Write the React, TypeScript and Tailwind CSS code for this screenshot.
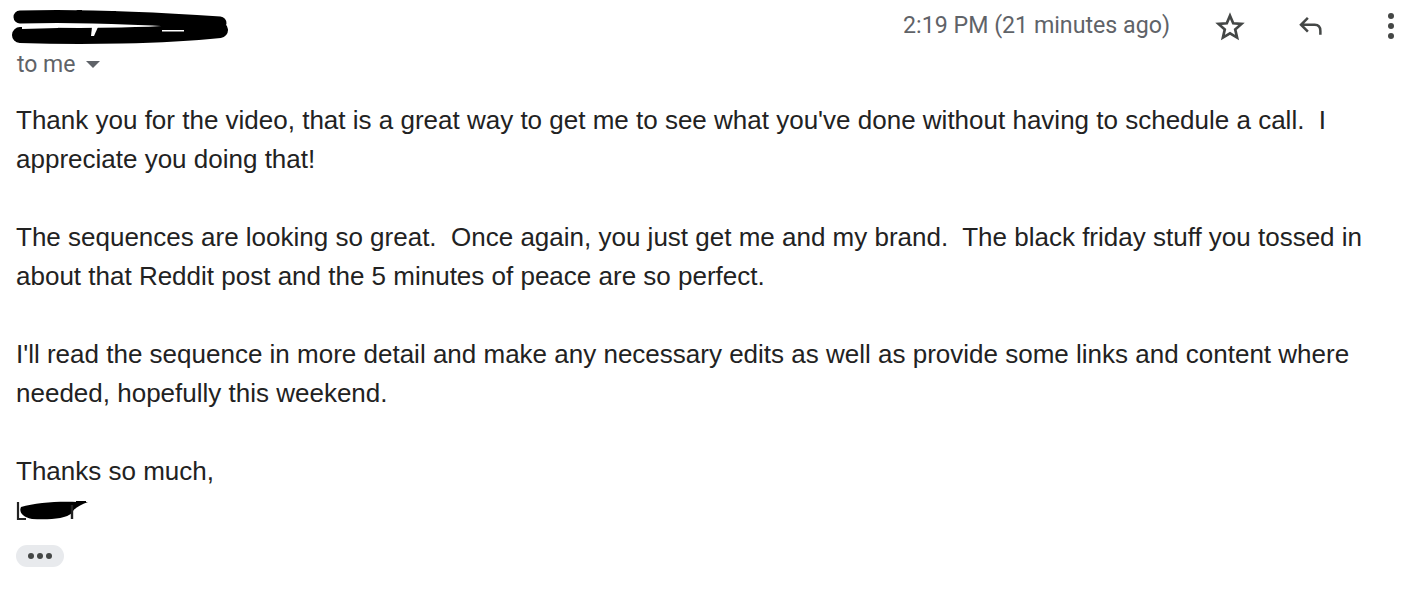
import React from "react";

function Scribble() {
  return (
    <svg width="220" height="38" viewBox="0 0 220 38" className="block">
      <path d="M8 9 C 70 7, 150 11, 208 15" stroke="#000" strokeWidth="13" strokeLinecap="round" fill="none" />
      <path d="M8 27 C 70 29, 150 28, 208 22" stroke="#000" strokeWidth="16" strokeLinecap="round" fill="none" />
      <path d="M10 18 L 46 18 L 46 20 L 10 21 Z" fill="#fff" />
      <path d="M80 19 L 86 19 L 82 28 L 79 28 Z" fill="#fff" />
      <path d="M150 22 L 172 22 L 172 23.5 L 150 23.5 Z" fill="#fff" />
      <path d="M64 2 L 70 2 L 70 6 Z" fill="#000" />
      <path d="M94 3 L 104 3 L 104 6 Z" fill="#000" />
    </svg>
  );
}

function SigScribble() {
  return (
    <svg width="80" height="22" viewBox="0 0 80 22" className="block">
      <path d="M2 3 L2 20 L10 20" stroke="#222" strokeWidth="2.2" fill="none" />
      <path d="M5 8 C 20 3, 46 2, 62 3 L 72 3 C 64 6, 58 9, 56 14 C 50 20, 32 21, 16 20 C 5 18, 3 12, 5 8 Z" fill="#000" />
      <path d="M60 2 L 70 2 L 70 3.6 L 60 3.6 Z" fill="#000" />
      <path d="M56 6 L56 20" stroke="#222" strokeWidth="2.4" />
    </svg>
  );
}

export default function App() {
  const p = "text-[26px] leading-[39px] text-[#222222] whitespace-pre-wrap";
  return (
    <div className="w-[1416px] h-[616px] bg-white relative overflow-hidden" style={{ fontFamily: "'Liberation Sans', Arial, sans-serif" }}>
      {/* header */}
      <div className="flex items-start justify-between pl-[10px] pr-[20px] pt-[8px]">
        <div>
          <div className="pl-[2px]">
            <Scribble />
          </div>
          <div className="flex items-center gap-[10px] pl-[7px] mt-[2px] text-[23px] text-[#5f6368]" style={{ fontFamily: "Roboto, sans-serif" }}>
            <span>to me</span>
            <svg width="14" height="8" viewBox="0 0 14 8"><path d="M0 0 L14 0 L7 7 Z" fill="#5f6368" /></svg>
          </div>
        </div>
        <div className="flex items-center -mt-[1px] text-[23.2px] text-[#5f6368]" style={{ fontFamily: "Roboto, sans-serif" }}>
          <span className="mr-[44px]">2:19 PM (21 minutes ago)</span>
          <svg width="32" height="32" viewBox="0 0 24 24" className="mr-[50px] mt-[4px]">
            <path d="M12 3.5 L14.4 9.2 L20.6 9.7 L15.9 13.8 L17.3 19.9 L12 16.7 L6.7 19.9 L8.1 13.8 L3.4 9.7 L9.6 9.2 Z" fill="none" stroke="#444746" strokeWidth="2" strokeLinejoin="miter" />
          </svg>
          <svg width="30" height="30" viewBox="0 0 24 24" className="mr-[60px] mt-[2px]">
            <path d="M9.5 5.5 L4 11 L9.5 16.5 M4.5 11 H15 C18 11 19.5 13 19.5 16 V19" fill="none" stroke="#444746" strokeWidth="2" />
          </svg>
          <svg width="10" height="30" viewBox="0 0 10 30" className="mt-[2px]">
            <circle cx="5" cy="5" r="3" fill="#444746" />
            <circle cx="5" cy="15" r="3" fill="#444746" />
            <circle cx="5" cy="25" r="3" fill="#444746" />
          </svg>
        </div>
      </div>

      {/* body */}
      <div className="pl-[16px] pt-[18px]">
        <div className={p}>
          Thank you for the video, that is a great way to get me to see what you've done without having to schedule a call.  I
          <br />
          appreciate you doing that!
        </div>
        <div className={p}>{"\u00a0"}</div>
        <div className={p}>
          The sequences are looking so great.  Once again, you just get me and my brand.  The black friday stuff you tossed in
          <br />
          about that Reddit post and the 5 minutes of peace are so perfect.
        </div>
        <div className={p}>{"\u00a0"}</div>
        <div className={p}>
          I'll read the sequence in more detail and make any necessary edits as well as provide some links and content where
          <br />
          needed, hopefully this weekend.
        </div>
        <div className={p}>{"\u00a0"}</div>
        <div className={p}>Thanks so much,</div>
        <div className="h-[39px] flex items-center">
          <SigScribble />
        </div>
        <div className="mt-[15px] w-[48px] h-[22px] rounded-full bg-[#e8eaed] flex items-center justify-center gap-[3px]">
          <span className="w-[6px] h-[6px] rounded-full bg-[#444746]" />
          <span className="w-[6px] h-[6px] rounded-full bg-[#444746]" />
          <span className="w-[6px] h-[6px] rounded-full bg-[#444746]" />
        </div>
      </div>
    </div>
  );
}
